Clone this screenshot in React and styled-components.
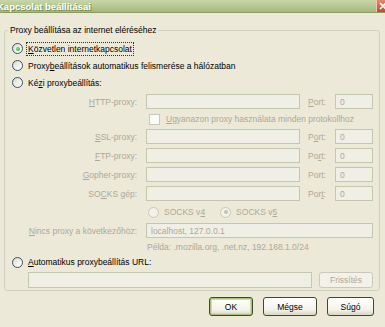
import styled, { createGlobalStyle } from "styled-components";

const GlobalStyle = createGlobalStyle`
  html, body {
    margin: 0;
    padding: 0;
  }
  body {
    background: #ece9d8;
    font-family: "Liberation Sans", Arial, sans-serif;
    font-size: 8.5px;
    color: #000;
  }
`;

const Window = styled.div`
  width: 385px;
  height: 327px;
  overflow: hidden;
  display: flex;
  flex-direction: column;
  background: #ece9d8;
`;

const TitleBar = styled.div`
  height: 12px;
  flex-shrink: 0;
  display: flex;
  align-items: center;
  justify-content: space-between;
  overflow: hidden;
  background: linear-gradient(180deg, #c9d6aa 0%, #b5c690 55%, #a3b77d 100%);
  border-bottom: 1px solid #8b9c63;
`;

const TitleText = styled.span`
  margin-left: -3px;
  font-size: 9.5px;
  font-weight: bold;
  color: #fff;
  white-space: nowrap;
  text-shadow: 1px 1px 0 #7d8c55;
`;

const CloseBox = styled.div`
  width: 8px;
  height: 12px;
  overflow: hidden;
  background: linear-gradient(180deg, #e38a6c 0%, #c4492b 100%);
  border-left: 1px solid #f2c5b4;
  display: flex;
  align-items: center;
`;

const Content = styled.div`
  padding: 12px 5px 0 4px;
`;

const Group = styled.fieldset`
  margin: 0;
  padding: 0;
  min-width: 0;
  border: 1px solid #d0d0bf;
  border-radius: 3px;
`;

const Legend = styled.legend`
  margin-left: 3px;
  padding: 0 2px;
  line-height: 11px;
`;

const Inner = styled.div`
  padding: 4px 6px 2px 7px;
`;

const OptionRow = styled.div`
  height: ${p => p.h || 17}px;
  margin-top: ${p => p.mt || 0}px;
  display: flex;
  align-items: center;
  gap: 5px;
`;

const RadioCircle = styled.span`
  width: 9px;
  height: 9px;
  flex-shrink: 0;
  border-radius: 50%;
  border: 1px solid ${p => (p.disabled ? "#cac8bb" : "#3b4e68")};
  background: ${p =>
    p.disabled
      ? "#f2f1ea"
      : "linear-gradient(135deg, #d8d7cc 0%, #f4f4ef 60%, #ffffff 100%)"};
  display: flex;
  align-items: center;
  justify-content: center;
  &::after {
    content: "";
    display: ${p => (p.checked ? "block" : "none")};
    width: 4px;
    height: 4px;
    border-radius: 50%;
    background: ${p =>
      p.disabled ? "#c6c4b6" : "radial-gradient(circle at 35% 35%, #8ee08a, #279a27)"};
  }
`;

const FocusText = styled.span`
  outline: 1px dotted #333;
  outline-offset: 1px;
`;

const ProxyGrid = styled.div`
  margin-top: 3px;
  margin-left: 15px;
  display: grid;
  grid-template-columns: 119px 162px 27px 38px;
  grid-template-rows: 15px 12px 15px 15px 15px 15px 14px 15px 9px;
  row-gap: 4px;
  align-items: center;
  color: #aca899;
`;

const FieldLabel = styled.span`
  text-align: right;
  padding-right: 9px;
  white-space: nowrap;
`;

const TextBox = styled.div`
  box-sizing: border-box;
  width: ${p => p.w}px;
  height: ${p => p.h || 15}px;
  border: 1px solid #c3c7ae;
  background: #f0efe6;
  color: #aca899;
  padding-left: 4px;
  display: flex;
  align-items: center;
  white-space: nowrap;
  overflow: hidden;
`;

const Span = styled.div`
  grid-column: 2 / 5;
  padding-left: ${p => p.pl || 0}px;
  display: flex;
  align-items: center;
  gap: ${p => p.gap || 5}px;
  white-space: nowrap;
`;

const CheckBox = styled.span`
  width: 9px;
  height: 9px;
  border: 1px solid #cac8bb;
  background: #fbfbf8;
`;

const SocksOption = styled.span`
  display: flex;
  align-items: center;
  gap: 5px;
  margin-right: ${p => p.mr || 0}px;
`;

const UrlRow = styled.div`
  margin-top: 2px;
  margin-left: 16px;
  display: flex;
  align-items: center;
  gap: 7px;
`;

const Button = styled.div`
  box-sizing: border-box;
  width: ${p => p.w}px;
  height: ${p => p.h || 19}px;
  border-radius: 3px;
  border: 1px solid ${p => (p.disabled ? "#cac8bb" : "#3d4a2c")};
  background: ${p =>
    p.disabled ? "#f3f2ea" : "linear-gradient(180deg, #ffffff 0%, #f3f2ea 70%, #d9d6c4 100%)"};
  color: ${p => (p.disabled ? "#aca899" : "#000")};
  box-shadow: ${p => (p.primary ? "inset 0 0 0 1px #a8c07a, inset 0 0 0 2px #cfdcae" : "none")};
  display: flex;
  align-items: center;
  justify-content: center;
`;

const ButtonRow = styled.div`
  margin-top: 6px;
  padding-right: 6px;
  display: flex;
  justify-content: flex-end;
  gap: 10px;
`;

const proxies = [
  { label: <><u>S</u>SL-proxy:</>, port: <>P<u>o</u>rt:</> },
  { label: <><u>F</u>TP-proxy:</>, port: <>Po<u>r</u>t:</> },
  { label: <><u>G</u>opher-proxy:</>, port: <>Port:</> },
  { label: <>SO<u>C</u>KS gép:</>, port: <>Por<u>t</u>:</> },
];

const FieldRow = ({ label, port }) => (
  <>
    <FieldLabel>{label}</FieldLabel>
    <TextBox w={154} />
    <span>{port}</span>
    <TextBox w={38}>0</TextBox>
  </>
);

const App = () => {
  return (
    <Window>
      <GlobalStyle />
      <TitleBar>
        <TitleText>Kapcsolat beállításai</TitleText>
        <CloseBox>
          <svg width="8" height="12" viewBox="0 0 8 12">
            <path d="M3 3 L9 9 M9 3 L3 9" stroke="#fff" strokeWidth="1.6" />
          </svg>
        </CloseBox>
      </TitleBar>
      <Content>
        <Group>
          <Legend>Proxy beállítása az internet eléréséhez</Legend>
          <Inner>
            <OptionRow>
              <RadioCircle checked />
              <FocusText><u>K</u>özvetlen internetkapcsolat</FocusText>
            </OptionRow>
            <OptionRow>
              <RadioCircle />
              <span>Proxy<u>b</u>eállítások automatikus felismerése a hálózatban</span>
            </OptionRow>
            <OptionRow>
              <RadioCircle />
              <span>Ké<u>z</u>i proxybeállítás:</span>
            </OptionRow>
            <ProxyGrid>
              <FieldLabel><u>H</u>TTP-proxy:</FieldLabel>
              <TextBox w={154} />
              <span><u>P</u>ort:</span>
              <TextBox w={38}>0</TextBox>
              <Span pl={3} gap={6}>
                <CheckBox />
                <span><u>U</u>gyanazon proxy használata minden protokollhoz</span>
              </Span>
              {proxies.map((p, i) => (
                <FieldRow key={i} label={p.label} port={p.port} />
              ))}
              <Span pl={2}>
                <SocksOption mr={10}>
                  <RadioCircle disabled />
                  <span>SOCKS v<u>4</u></span>
                </SocksOption>
                <SocksOption>
                  <RadioCircle disabled checked />
                  <span>SOCKS v<u>5</u></span>
                </SocksOption>
              </Span>
              <FieldLabel><u>N</u>incs proxy a következőhöz:</FieldLabel>
              <Span>
                <TextBox w={227}>localhost, 127.0.0.1</TextBox>
              </Span>
              <Span pl={1}>Példa: .mozilla.org, .net.nz, 192.168.1.0/24</Span>
            </ProxyGrid>
            <OptionRow h={16} mt={3}>
              <RadioCircle />
              <span><u>A</u>utomatikus proxybeállítás URL:</span>
            </OptionRow>
            <UrlRow>
              <TextBox w={284} h={16} />
              <Button w={54} h={16} disabled>Frissítés</Button>
            </UrlRow>
          </Inner>
        </Group>
        <ButtonRow>
          <Button w={44} primary>OK</Button>
          <Button w={54}>Mégse</Button>
          <Button w={47}>Súgó</Button>
        </ButtonRow>
      </Content>
    </Window>
  );
};

export default App;
